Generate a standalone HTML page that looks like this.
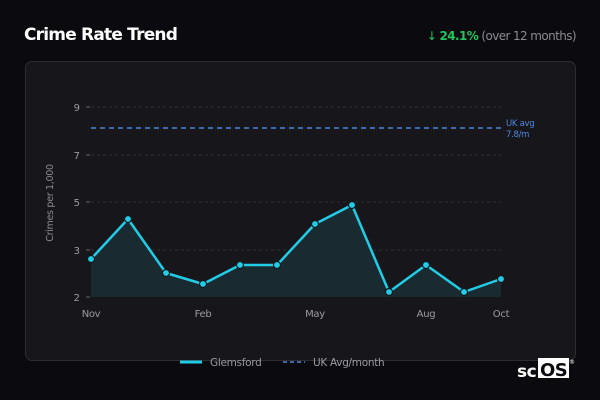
<!DOCTYPE html>
<html><head><style>
body{margin:0;width:600px;height:400px;background:#0b0b0f;font-family:"DejaVu Sans","Liberation Sans",sans-serif;position:relative;overflow:hidden;color:#fff}
.t{position:absolute;left:24px;top:25px;font-size:17px;font-weight:bold;letter-spacing:-0.8px}
.r{position:absolute;right:24px;top:29px;font-size:12px;color:#8a8a90;letter-spacing:-0.6px}
.r b{color:#22c55e}
.card{position:absolute;left:25px;top:61px;width:549px;height:298px;border:1px solid #2c2c31;border-radius:7px;background:#17171b}
</style></head><body>
<div class="t">Crime Rate Trend</div>
<div class="r"><span style="color:#22c55e">↓</span> <b>24.1%</b> (over 12 months)</div>
<div class="card"></div>
<svg style="position:absolute;left:0;top:0" width="600" height="400" font-family="DejaVu Sans, Liberation Sans, sans-serif">
<g stroke="#2e2e33" stroke-dasharray="3,3" stroke-width="1">
<line x1="91" y1="107" x2="501" y2="107"/><line x1="91" y1="155" x2="501" y2="155"/><line x1="91" y1="202" x2="501" y2="202"/><line x1="91" y1="250" x2="501" y2="250"/>
</g>
<g stroke="#666" stroke-width="1"><line x1="86" y1="107" x2="90" y2="107"/><line x1="86" y1="155" x2="90" y2="155"/><line x1="86" y1="202" x2="90" y2="202"/><line x1="86" y1="250" x2="90" y2="250"/><line x1="86" y1="297" x2="90" y2="297"/></g>
<g fill="#9a9aa0" font-size="10" text-anchor="end"><text x="80" y="111">9</text><text x="80" y="159">7</text><text x="80" y="206">5</text><text x="80" y="254">3</text><text x="80" y="301">2</text></g>
<text transform="translate(53,203) rotate(-90)" fill="#8a8a90" font-size="9.5" text-anchor="middle" letter-spacing="-0.3">Crimes per 1,000</text>
<line x1="91" y1="128" x2="501" y2="128" stroke="#4f86e0" stroke-width="1.6" stroke-dasharray="5,4"/>
<text x="506" y="126" fill="#4f86e0" font-size="8.5" letter-spacing="-0.3">UK avg</text><text x="506" y="137" fill="#4f86e0" font-size="8.5" letter-spacing="-0.3">7.8/m</text>
<path d="M91,259 L128,219 L166,273 L203,284 L240,265 L277,265 L315,224 L352,205 L389,292 L426,265 L464,292 L501,279 L501,297 L91,297Z" fill="#1a2e33" opacity="0.9"/>
<polyline points="91,259 128,219 166,273 203,284 240,265 277,265 315,224 352,205 389,292 426,265 464,292 501,279" fill="none" stroke="#22cce6" stroke-width="2.5" stroke-linejoin="round"/>
<g fill="#22cce6" stroke="#0f1a1e" stroke-width="1.2">
<circle cx="91" cy="259" r="3.5"/><circle cx="128" cy="219" r="3.5"/><circle cx="166" cy="273" r="3.5"/><circle cx="203" cy="284" r="3.5"/><circle cx="240" cy="265" r="3.5"/><circle cx="277" cy="265" r="3.5"/><circle cx="315" cy="224" r="3.5"/><circle cx="352" cy="205" r="3.5"/><circle cx="389" cy="292" r="3.5"/><circle cx="426" cy="265" r="3.5"/><circle cx="464" cy="292" r="3.5"/><circle cx="501" cy="279" r="3.5"/>
</g>
<g fill="#9a9aa0" font-size="10" text-anchor="middle" letter-spacing="-0.3"><text x="91" y="317">Nov</text><text x="203" y="317">Feb</text><text x="315" y="317">May</text><text x="426" y="317">Aug</text><text x="501" y="317">Oct</text></g>
<line x1="180" y1="362" x2="202" y2="362" stroke="#22cce6" stroke-width="3"/>
<text x="210" y="366" fill="#9a9aa0" font-size="10.5" letter-spacing="-0.3">Glemsford</text>
<line x1="283" y1="362" x2="305" y2="362" stroke="#4f86e0" stroke-width="1.6" stroke-dasharray="4,3"/>
<text x="313" y="366" fill="#9a9aa0" font-size="10.5" letter-spacing="-0.3">UK Avg/month</text>
<text x="517" y="377" fill="#fff" font-size="17" font-weight="bold" letter-spacing="-0.5">sc</text>
<rect x="538" y="358" width="31" height="20" fill="#fff"/>
<text x="540" y="376" fill="#0b0b0f" font-size="18" font-weight="bold" letter-spacing="-0.5">OS</text>
<text x="569" y="364" fill="#fff" font-size="6">®</text>
</svg>
</body></html>
